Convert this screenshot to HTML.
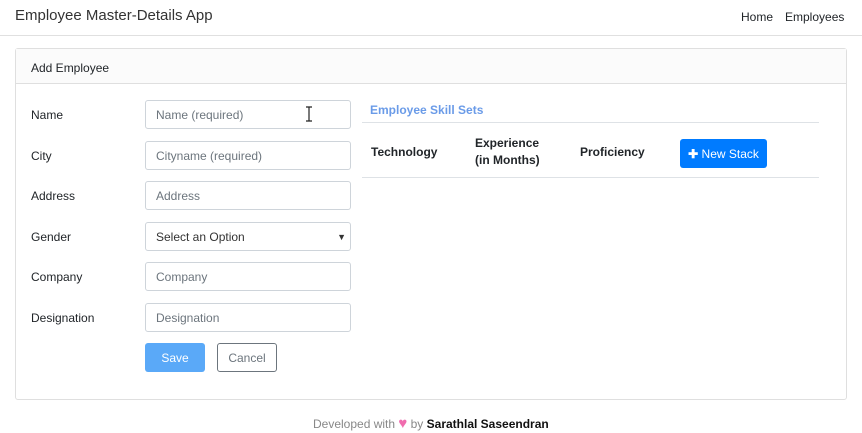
<!DOCTYPE html>
<html><head><meta charset="utf-8"><style>
*{box-sizing:border-box;margin:0;padding:0}
body{width:862px;height:433px;background:#fff;font-family:"Liberation Sans",sans-serif;color:#212529;position:relative;overflow:hidden;font-size:12px}
.a{position:absolute}
.inp{position:absolute;left:145px;width:206px;height:29px;border:1px solid #ced4da;border-radius:3px;padding-left:10px;line-height:29px;color:#6c757d;font-size:12px}
.lbl{position:absolute;left:31px;font-size:12px}
.th{position:absolute;font-weight:bold;font-size:12px;color:#212529}
</style></head><body>
<div class="a" style="left:15px;top:7px;font-size:15px;color:#333">Employee Master-Details App</div>
<div class="a" style="left:741px;top:10px;font-size:12px">Home</div>
<div class="a" style="left:785px;top:10px;font-size:12px">Employees</div>
<div class="a" style="left:0;top:35px;width:862px;height:1px;background:#e0e0e0"></div>

<div class="a" style="left:15px;top:48px;width:832px;height:352px;border:1px solid #dfdfdf;border-radius:3px"></div>
<div class="a" style="left:16px;top:49px;width:830px;height:35px;background:#fbfbfb;border-bottom:1px solid #dfdfdf"></div>
<div class="a" style="left:31px;top:61px">Add Employee</div>

<div class="lbl" style="top:108px">Name</div>
<div class="inp" style="top:100px">Name (required)</div>
<svg class="a" style="left:305px;top:106px" width="8" height="16"><path d="M1 1h6M4 1v14M1 15h6" stroke="#222" stroke-width="1.2" fill="none"/></svg>
<div class="lbl" style="top:149px">City</div>
<div class="inp" style="top:141px">Cityname (required)</div>
<div class="lbl" style="top:189px">Address</div>
<div class="inp" style="top:181px">Address</div>
<div class="lbl" style="top:230px">Gender</div>
<div class="inp" style="top:222px;color:#333">Select an Option<span style="position:absolute;right:4px;font-size:9px">▼</span></div>
<div class="lbl" style="top:270px">Company</div>
<div class="inp" style="top:262px">Company</div>
<div class="lbl" style="top:311px">Designation</div>
<div class="inp" style="top:303px">Designation</div>
<div class="a" style="left:145px;top:343px;width:60px;height:29px;background:#5aa9f8;border-radius:3px;color:#fff;text-align:center;line-height:30px">Save</div>
<div class="a" style="left:217px;top:343px;width:60px;height:29px;border:1px solid #6c757d;border-radius:3px;color:#6c757d;text-align:center;line-height:29px">Cancel</div>

<div class="a" style="left:370px;top:103px;font-weight:bold;color:#6a9be8">Employee Skill Sets</div>
<div class="a" style="left:362px;top:122px;width:457px;height:1px;background:#dee2e6"></div>
<div class="th" style="left:371px;top:145px">Technology</div>
<div class="th" style="left:475px;top:135px;line-height:17px">Experience<br>(in Months)</div>
<div class="th" style="left:580px;top:145px">Proficiency</div>
<div class="a" style="left:680px;top:139px;width:87px;height:29px;background:#007bff;border-radius:3px;color:#fff;line-height:30px;text-align:center"><b>✚</b> New Stack</div>
<div class="a" style="left:362px;top:177px;width:457px;height:1px;background:#dee2e6"></div>

<div class="a" style="left:313px;top:417px;color:#888">Developed with <span style="color:#f06cae;font-size:15px;line-height:12px">♥</span> by <b style="color:#111">Sarathlal Saseendran</b></div>
</body></html>
